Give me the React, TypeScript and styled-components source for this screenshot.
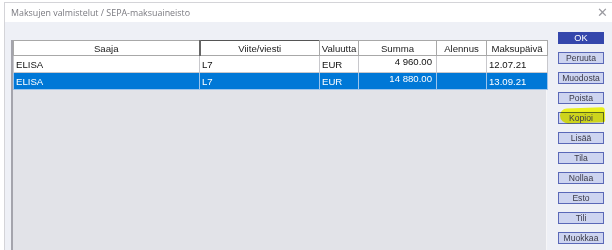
import styled, { createGlobalStyle } from "styled-components";

const Global = createGlobalStyle`
  html, body { margin:0; padding:0; background:#ffffff; overflow:hidden; }
  body { font-family:"Liberation Sans", Arial, sans-serif; }
`;

const Window = styled.div`
  margin:2px 0 0 4px;
  height:248px;
  border-top:1px solid #d4d4d8;
  border-left:1px solid #d4d4d8;
  display:flex;
  flex-direction:column;
  background:#eef0f6;
  overflow:hidden;
`;

const TitleBar = styled.div`
  height:19px;
  flex:none;
  background:#ffffff;
  display:flex;
  align-items:center;
  justify-content:space-between;
  padding:0 4px 0 6px;
  font-family:"Open Sans", "Liberation Sans", sans-serif;
  font-size:8.9px;
  color:#7a7a80;
`;

const Close = styled.span`
  font-size:13px;
  color:#9a9aa0;
  font-weight:300;
  line-height:1;
`;

const Body = styled.div`
  flex:1;
  display:flex;
  gap:11px;
  padding:10px 0 0 6px;
  min-height:0;
`;

const Grid = styled.div`
  width:533px;
  margin-top:8px;
  background:#e2e3e8;
  border-left:2px solid #a4a4ac;
  border-right:1px solid #f6f6f8;
  font-size:9.6px;
  color:#111;
`;

const Table = styled.table`
  border-collapse:collapse;
  table-layout:fixed;
  width:534px;
`;

const Head = styled.th<{ $active?: boolean }>`
  height:14px;
  padding:0;
  font-weight:normal;
  background:#ffffff;
  color:#222;
  text-align:center;
  border:1px solid #a8a8a8;
  border-top-color:${(p) => (p.$active ? "#555" : "#a8a8a8")};
  border-left:${(p) => (p.$active ? "2px solid #666" : "1px solid #a8a8a8")};
`;

const Row = styled.tr<{ $selected?: boolean }>`
  background:${(p) => (p.$selected ? "#0078d7" : "#ffffff")};
  color:${(p) => (p.$selected ? "#ffffff" : "#111")};
`;

const Cell = styled.td<{ $right?: boolean; $selected?: boolean }>`
  height:13px;
  padding:${(p) => (p.$right ? "0 4px 3px 2px" : "1px 2px 0")};
  text-align:${(p) => (p.$right ? "right" : "left")};
  vertical-align:${(p) => (p.$right ? "top" : "middle")};
  border:1px solid ${(p) => (p.$selected ? "#9cc4ec" : "#c8c8cc")};
  white-space:nowrap;
  overflow:hidden;
`;

const Buttons = styled.div`
  width:46px;
  display:flex;
  flex-direction:column;
  gap:8px;
`;

const Btn = styled.div<{ $primary?: boolean }>`
  position:relative;
  height:12px;
  box-sizing:border-box;
  display:flex;
  align-items:center;
  justify-content:center;
  font-size:${(p) => (p.$primary ? "9.2px" : "8.6px")};
  color:${(p) => (p.$primary ? "#ffffff" : "#3a3a48")};
  background:${(p) => (p.$primary ? "#3446ac" : "#cdd4f0")};
  border:1px solid ${(p) => (p.$primary ? "#3446ac" : "#5a68b8")};
`;

const Label = styled.span`
  position:relative;
`;

const Highlight = styled.span`
  position:absolute;
  left:1px;
  right:-2px;
  top:-5px;
  bottom:0px;
  background:#eaf21c;
  mix-blend-mode:darken;
  border-radius:7px 3px 2px 8px;
  transform:rotate(-2deg);
`;

const cols = [186, 120, 39, 78, 50, 61];
const heads = ["Saaja", "Viite/viesti", "Valuutta", "Summa", "Alennus", "Maksupäivä"];
const rows = [
  ["ELISA", "L7", "EUR", "4 960.00", "", "12.07.21"],
  ["ELISA", "L7", "EUR", "14 880.00", "", "13.09.21"],
];
const buttons = ["Peruuta", "Muodosta", "Poista", "Kopioi", "Lisää", "Tila", "Nollaa", "Esto", "Tili", "Muokkaa"];

export default function App() {
  return (
    <>
      <Global />
      <Window>
        <TitleBar>
          <span>Maksujen valmistelut / SEPA-maksuaineisto</span>
          <Close>✕</Close>
        </TitleBar>
        <Body>
          <Grid>
            <Table>
              <colgroup>
                {cols.map((w, i) => (
                  <col key={i} style={{ width: w }} />
                ))}
              </colgroup>
              <thead>
                <tr>
                  {heads.map((h, i) => (
                    <Head key={h} $active={i === 1}>{h}</Head>
                  ))}
                </tr>
              </thead>
              <tbody>
                {rows.map((r, ri) => (
                  <Row key={ri} $selected={ri === 1}>
                    {r.map((c, ci) => (
                      <Cell key={ci} $right={ci === 3} $selected={ri === 1}>{c}</Cell>
                    ))}
                  </Row>
                ))}
              </tbody>
            </Table>
          </Grid>
          <Buttons>
            <Btn $primary>OK</Btn>
            {buttons.map((b) => (
              <Btn key={b}>
                {b === "Kopioi" && <Highlight />}
                <Label>{b}</Label>
              </Btn>
            ))}
          </Buttons>
        </Body>
      </Window>
    </>
  );
}
